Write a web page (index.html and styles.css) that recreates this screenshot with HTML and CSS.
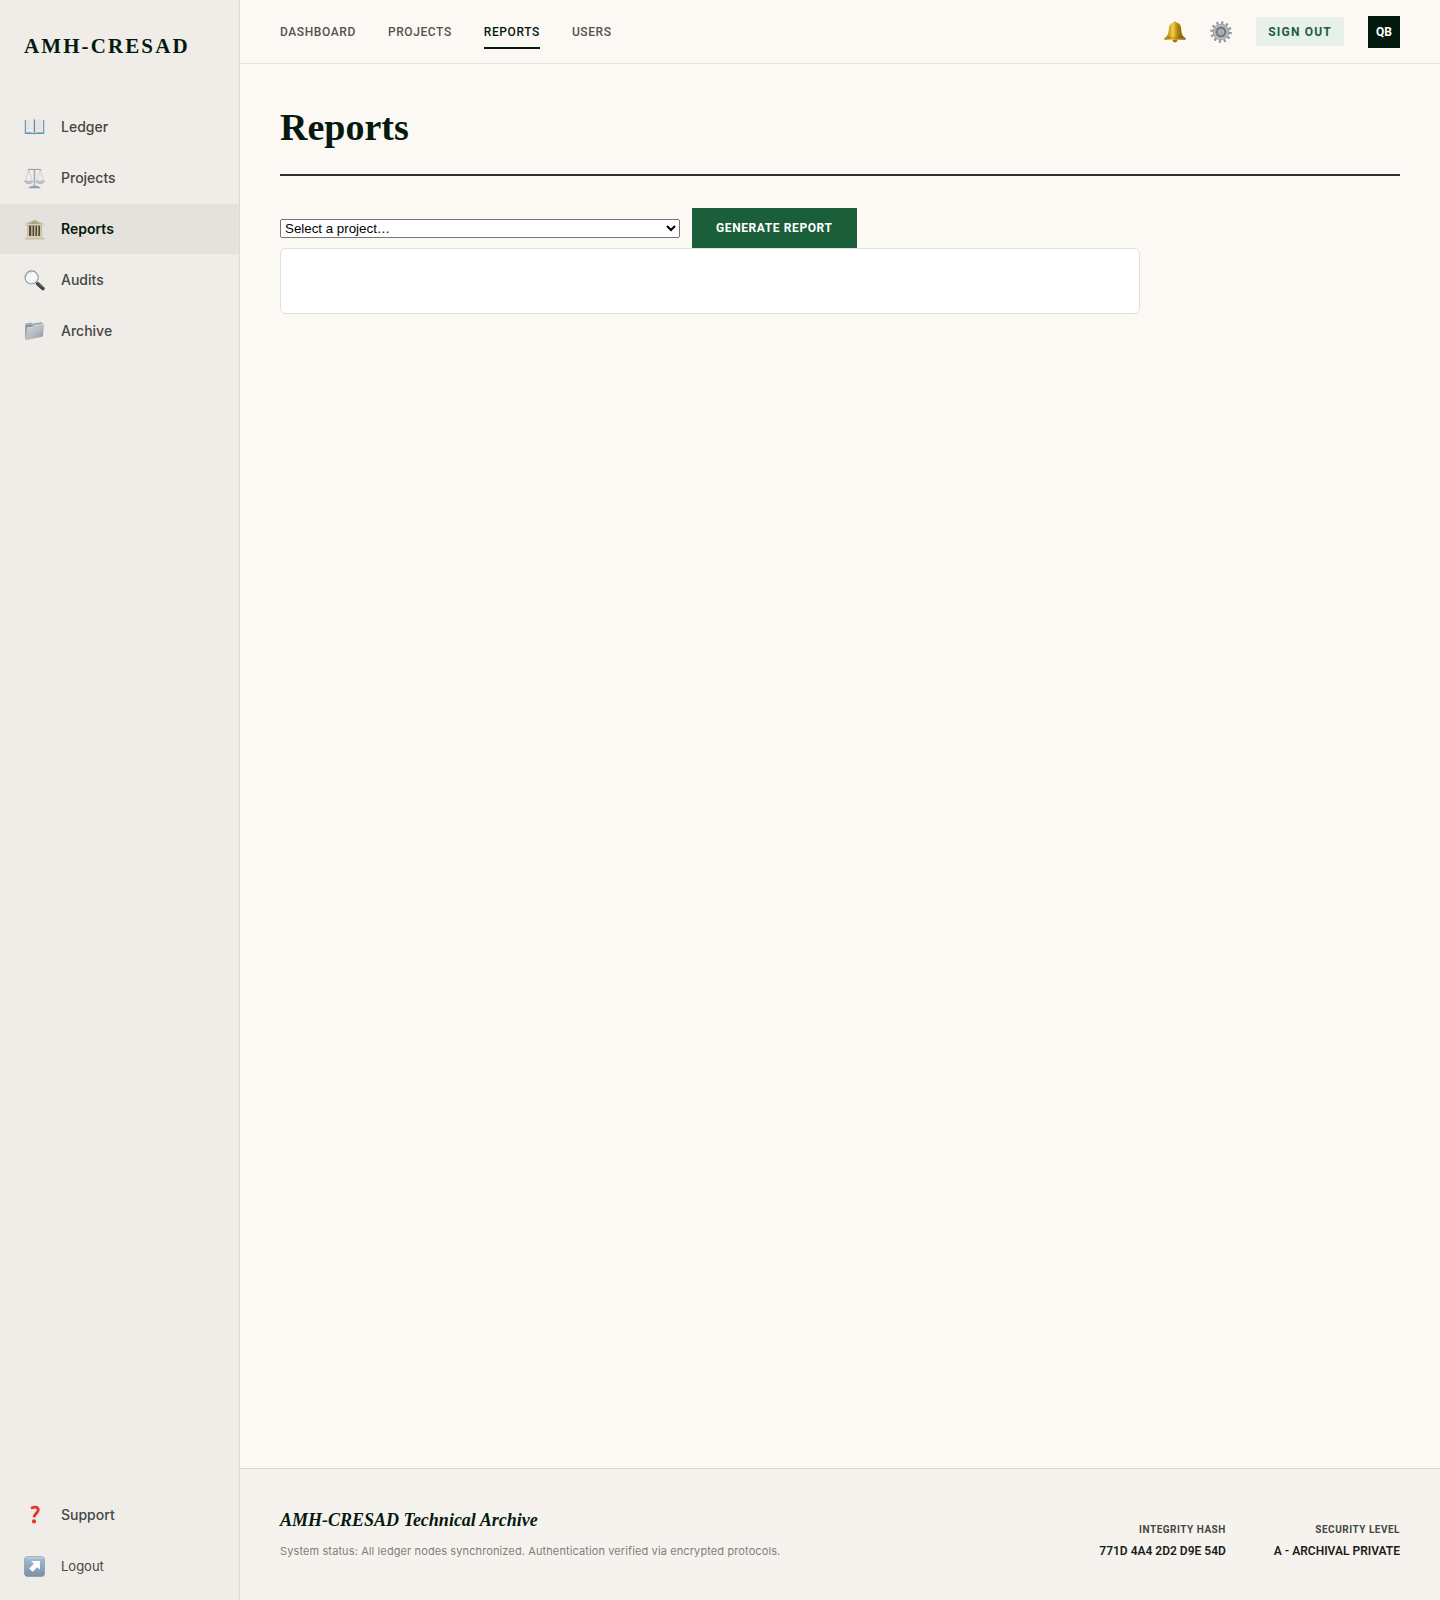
FILE: index.html
```html
<!DOCTYPE html>
<html lang="en">
<head>
<meta charset="utf-8">
<meta name="viewport" content="width=device-width, initial-scale=1">
<title>Reports - AMH-CRESAD</title>
<link rel="stylesheet" href="styles.css">
</head>
<body>
<div class="app">
  <aside class="sidebar">
    <div class="brand">AMH-CRESAD</div>
    <nav class="side-nav" aria-label="Sections">
      <a class="side-link" href="#ledger">
        <svg class="icon" viewBox="0 0 22 22" aria-hidden="true">
          <defs><linearGradient id="page" x1="0" x2="1"><stop offset="0" stop-color="#e4e3e4"/><stop offset=".75" stop-color="#f3f2f2"/><stop offset="1" stop-color="#b9b7b9"/></linearGradient></defs>
          <path d="M.8 3.200h20.400v14.600h-8.600q-1.600 1-3.200 0H.8z" fill="#5e97b5"/>
          <path d="M2 2q5-1 9 .7v14q-4-1.400-9-.7z" fill="url(#page)"/>
          <path d="M20 2q-5-1-9 .7v14q4-1.400 9-.7z" fill="#e9e8e9"/>
          <path d="M11 2.700v14.500" stroke="#858286" stroke-width="1.200"/>
          <path d="M3.500 4.500h5.500M3.500 7h5.500M3.500 9.500h5.500M3.500 12h5.500M13 4.500h5.500M13 7h5.500M13 9.500h5.500M13 12h5.500" stroke="#d6d4d8" stroke-width=".6"/>
          <path d="M2 16q5-.8 9 .8 4-1.600 9-.8" fill="none" stroke="#cfe0e8" stroke-width=".6"/>
        </svg>
        <span>Ledger</span>
      </a>
      <a class="side-link" href="#projects">
        <svg class="icon" viewBox="0 0 22 22" fill="none" aria-hidden="true">
          <path d="M4 1.800q3.500-.9 7 0 3.500-.9 7 0" stroke="#8f98a3" stroke-width="1.100"/>
          <path d="M11 1v17.500" stroke="#8f98a3" stroke-width="1.500"/>
          <path d="M11.300 2v16" stroke="#d4dae0" stroke-width=".5"/>
          <path d="M4.800 2L1.500 14M4.800 2l4 12M17.200 2l-4 12M17.200 2l3.300 12" stroke="#b5bac1" stroke-width=".6"/>
          <path d="M.6 13.800h8.800q-1 2.600-4.400 2.600T.6 13.800zM12.600 13.800h8.800q-1 2.600-4.400 2.600t-4.400-2.600z" fill="#c9cfd6" stroke="#8a939e" stroke-width=".6"/>
          <path d="M8 18.500h6l1.500 1.300H17v1.400H5v-1.400h1.500z" fill="#89939e"/>
          <path d="M6 20h10" stroke="#c4cbd2" stroke-width=".5"/>
        </svg>
        <span>Projects</span>
      </a>
      <a class="side-link is-active" href="#reports" aria-current="page">
        <svg class="icon" viewBox="0 0 22 22" aria-hidden="true">
          <path d="M11 .4l9.500 4.200v2.200h-19V4.600z" fill="#c9c2a1"/>
          <path d="M11 2l6.500 2.900h-13z" fill="#a59d7c"/>
          <path d="M1.800 5.600h18.400v1.200H1.800z" fill="#e2dcc0"/>
          <path d="M3.500 6.800h15V18h-15z" fill="#4d463b"/>
          <path d="M3.300 6.800h2v11.400h-2zM7.600 6.800h1.300v11.400H7.600zM10.700 6.800H12v11.400h-1.300zM13.700 6.800H15v11.400h-1.300zM16.800 6.800h1.900v11.400h-1.900z" fill="#d2cbad"/>
          <path d="M2.500 18h17v1.500h-17z" fill="#d8d2b4"/>
          <path d="M1 19.500h20.500v1.900H1z" fill="#c4bd98"/>
          <path d="M1 19.700h20.500" stroke="#e5dfc6" stroke-width=".5"/>
        </svg>
        <span>Reports</span>
      </a>
      <a class="side-link" href="#audits">
        <svg class="icon" viewBox="0 0 22 22" aria-hidden="true">
          <path d="M12.500 12.500l3 3" stroke="#7f858a" stroke-width="1.800"/>
          <path d="M14.500 14.500l5.300 4.900" stroke="#3e4144" stroke-width="3.800" stroke-linecap="round"/>
          <path d="M15 13.800l5 4.600" stroke="#84888b" stroke-width=".8" stroke-linecap="round"/>
          <circle cx="8" cy="7.800" r="6.900" fill="#f7f7f6" stroke="#8e979f" stroke-width="1.200"/>
          <path d="M2.700 7.500A5.400 5.400 0 0 1 8 2.500" fill="none" stroke="#c6d5e2" stroke-width="1"/>
          <path d="M13 9.800A5.600 5.600 0 0 1 8.500 13.300" fill="none" stroke="#dcdedd" stroke-width="1"/>
        </svg>
        <span>Audits</span>
      </a>
      <a class="side-link" href="#archive">
        <svg class="icon" viewBox="0 0 22 22" aria-hidden="true">
          <defs><linearGradient id="folder" x1="0" y1="0" x2="1" y2="1"><stop offset="0" stop-color="#d0d6da"/><stop offset=".5" stop-color="#b8bfc4"/><stop offset="1" stop-color="#8b959c"/></linearGradient></defs>
          <path d="M1.300 19V3.600l.8-1 5.500-.7 1 .9 9.700-1.500 1 .9v2z" fill="#89949c"/>
          <path d="M2 4l5.500-.8 1 .9 9.800-1.400" fill="none" stroke="#ced4d8" stroke-width=".7"/>
          <path d="M3.200 6.900l6-.9 1.200-1.300 9.900-1.500q.7 0 .6.800l-1 11.600q-.1.800-.9 1L3 20q-1.300.2-1.200-.9z" fill="url(#folder)"/>
          <path d="M3.500 7.200l6-.9 1.200-1.200 9.700-1.500" fill="none" stroke="#e2e6e8" stroke-width=".6"/>
        </svg>
        <span>Archive</span>
      </a>
    </nav>
    <nav class="side-nav side-nav-bottom" aria-label="Account">
      <a class="side-link" href="#support">
        <svg class="icon" viewBox="0 0 22 22" aria-hidden="true">
          <path d="M7.300 3.400Q14.200.3 14.900 5c.3 2.900-4 4-4.300 7.900" fill="none" stroke="#e8342f" stroke-width="3"/>
          <circle cx="10.500" cy="17.200" r="2.200" fill="#e5332f"/>
        </svg>
        <span>Support</span>
      </a>
      <button class="side-link side-button" type="button">
        <svg class="icon" viewBox="0 0 22 22" aria-hidden="true">
          <defs><linearGradient id="tile" x2="0" y2="1"><stop offset="0" stop-color="#a9c2d6"/><stop offset=".45" stop-color="#8faac0"/><stop offset="1" stop-color="#7890a5"/></linearGradient></defs>
          <rect x=".4" y=".4" width="21.200" height="21.200" rx="3.800" fill="url(#tile)" stroke="#748ca1" stroke-width=".6"/>
          <path d="M2.500 1.900h17" stroke="#c6d8e5" stroke-width="1" stroke-linecap="round"/>
          <path d="M7.500 5.300h9.200v9.200l-2.800-2.700-5 4.800-3.500-3.500 4.900-4.900z" fill="#fff"/>
        </svg>
        <span>Logout</span>
      </button>
    </nav>
  </aside>

  <div class="page">
    <header class="topbar">
      <nav class="tabs" aria-label="Main">
        <a class="tab" href="#dashboard">DASHBOARD</a>
        <a class="tab" href="#projects">PROJECTS</a>
        <a class="tab is-active" href="#reports" aria-current="page">REPORTS</a>
        <a class="tab" href="#users">USERS</a>
      </nav>
      <div class="actions">
        <button class="icon-button" type="button" aria-label="Notifications">
          <svg class="icon-large" viewBox="0 0 22 22" aria-hidden="true">
            <defs><linearGradient id="brass"><stop offset="0" stop-color="#8a6500"/><stop offset=".28" stop-color="#dcb11f"/><stop offset=".4" stop-color="#f0d257"/><stop offset=".6" stop-color="#b98a08"/><stop offset="1" stop-color="#664700"/></linearGradient></defs>
            <circle cx="11" cy="19.300" r="2.300" fill="#a87806"/>
            <circle cx="11" cy="1.900" r="1.500" fill="#b98b10"/>
            <path d="M11 1.600c4.200 0 6 2.500 6.200 6.400.2 5 1.400 7.400 3.900 8.700.9.500.8 1.800-.3 2H1.200c-1.100-.2-1.200-1.500-.3-2 2.500-1.300 3.700-3.700 3.900-8.700.2-3.900 2-6.400 6.200-6.400z" fill="url(#brass)"/>
            <path d="M3.500 16.400q7.500 1.600 15 0" fill="none" stroke="#7b5800" stroke-width=".6"/>
            <path d="M1.200 17.500q9.800 1.800 19.600 0" fill="none" stroke="#d9b03a" stroke-width=".5"/>
          </svg>
        </button>
        <button class="icon-button" type="button" aria-label="Settings">
          <svg class="icon-large" viewBox="0 0 22 22" aria-hidden="true">
            <circle cx="11" cy="11" r="9.400" fill="none" stroke="#8c949d" stroke-width="2.800" stroke-dasharray="2.100 2.822"/>
            <circle cx="11" cy="11" r="6.600" fill="#a2a9b0" stroke="#8f97a0" stroke-width="3.400"/>
            <circle cx="11" cy="11" r="6.700" fill="none" stroke="#bcc2c9" stroke-width="1.400"/>
            <circle cx="11" cy="11" r="4.200" fill="#8b939c" stroke="#66707a" stroke-width="1.200"/>
            <circle cx="11" cy="11" r="2.800" fill="#c9ced2"/>
            <circle cx="11" cy="11" r="1.400" fill="#fcf9f4" stroke="#59626a" stroke-width=".8"/>
          </svg>
        </button>
        <button class="sign-out" type="button">SIGN OUT</button>
        <div class="avatar">QB</div>
      </div>
    </header>

    <main class="content">
      <h1 class="title">Reports</h1>
      <form class="filters">
        <select class="project-select" aria-label="Project">
          <option>Select a project…</option>
        </select>
        <button class="generate" type="button">GENERATE REPORT</button>
      </form>
      <section class="report" aria-label="Generated report"></section>
    </main>

    <footer class="footer">
      <div class="about">
        <p class="about-title">AMH-CRESAD Technical Archive</p>
        <p class="about-text">System status: All ledger nodes synchronized. Authentication verified via encrypted protocols.</p>
      </div>
      <dl class="facts">
        <div class="fact">
          <dt>INTEGRITY HASH</dt>
          <dd>771D 4A4 2D2 D9E 54D</dd>
        </div>
        <div class="fact">
          <dt>SECURITY LEVEL</dt>
          <dd>A - ARCHIVAL PRIVATE</dd>
        </div>
      </dl>
    </footer>
  </div>
</div>
</body>
</html>
```
FILE: styles.css
```css
:root {
  --ink: #051a0f;
  --muted: #434843;
  --green: #1b5e3a;
  --line: #e5e2dd;
  --sans: Inter, "Liberation Sans", sans-serif;
  --label: Roboto, "Liberation Sans", sans-serif;
  --serif: "Liberation Serif", serif;
}

* {
  box-sizing: border-box;
}

body {
  margin: 0;
  background: #fcf9f4;
  color: #1c1c19;
  font-family: var(--sans);
}

a {
  color: inherit;
  text-decoration: none;
}

.app {
  display: flex;
  min-height: 100vh;
}

/* Sidebar */
.sidebar {
  display: flex;
  flex-direction: column;
  flex: 0 0 240px;
  padding: 32px 0 9px;
  background: #f0ede8;
  border-right: 1px solid #dcdad5;
}

.brand {
  padding: 0 24px;
  margin-bottom: 42px;
  color: var(--ink);
  font: 700 21px/28px var(--serif);
  letter-spacing: 0.1em;
}

.side-nav {
  display: flex;
  flex-direction: column;
  gap: 1px;
}

.side-nav-bottom {
  margin-top: auto;
}

.side-link {
  display: flex;
  align-items: center;
  gap: 16px;
  height: 50px;
  padding: 0 24px;
  color: var(--muted);
  font-size: 14px;
  font-weight: 500;
  line-height: 20px;
}

.side-link.is-active {
  background: var(--line);
  color: var(--ink);
  font-weight: 600;
}

.side-button {
  border: 0;
  background: none;
  font-family: inherit;
  font-size: 13px;
  font-weight: 400;
  text-align: left;
  cursor: pointer;
}

.icon {
  flex: none;
  width: 21px;
  height: 21px;
}

/* Top bar */
.page {
  display: flex;
  flex: 1;
  flex-direction: column;
  min-width: 0;
}

.topbar {
  display: flex;
  align-items: center;
  justify-content: space-between;
  height: 64px;
  padding: 0 40px;
  border-bottom: 1px solid var(--line);
}

.tabs {
  display: flex;
  gap: 32px;
}

.tab {
  padding: 8px 0 6px;
  border-bottom: 2px solid transparent;
  color: #50544f;
  font: 500 12px/18px var(--label);
  letter-spacing: 0.05em;
}

.tab.is-active {
  border-color: var(--ink);
  color: var(--ink);
}

.actions {
  display: flex;
  align-items: center;
  gap: 24px;
}

.icon-button {
  display: flex;
  padding: 0;
  border: 0;
  background: none;
  cursor: pointer;
}

.icon-large {
  width: 22px;
  height: 22px;
}

.sign-out {
  height: 29px;
  padding: 0 12px;
  border: 0;
  background: #e8f0ea;
  color: var(--green);
  font: 700 12px/18px var(--label);
  letter-spacing: 0.1em;
}

.avatar {
  display: flex;
  align-items: center;
  justify-content: center;
  width: 32px;
  height: 32px;
  background: var(--ink);
  color: #fff;
  font: 700 12px/18px var(--label);
}

/* Report page */
.content {
  flex: 1;
  padding: 40px;
}

.title {
  margin: 0 0 32px;
  padding-bottom: 24px;
  border-bottom: 2px solid #30312e;
  color: var(--ink);
  font: 700 38px/46px var(--serif);
}

.filters {
  display: flex;
  align-items: center;
  gap: 12px;
}

.project-select {
  width: 400px;
}

.generate {
  height: 40px;
  padding: 0 24px;
  border: 0;
  background: var(--green);
  color: #fff;
  font: 700 12px/18px var(--label);
  letter-spacing: 0.05em;
}

.report {
  max-width: 860px;
  padding: 32px;
  border: 1px solid #dde2df;
  border-radius: 6px;
  background: #fff;
}

/* Footer */
.footer {
  display: flex;
  align-items: flex-end;
  justify-content: space-between;
  padding: 40px;
  border-top: 1px solid #dcdad5;
  background: #f6f3ee;
}

.about-title {
  margin: 0 0 12px;
  color: var(--ink);
  font: italic 700 18px/22px var(--serif);
}

.about-text {
  margin: 0;
  color: #7c7f7a;
  font-size: 11px;
  line-height: 17px;
  letter-spacing: 0.01em;
}

.facts {
  display: flex;
  gap: 48px;
  margin: 0;
  text-align: right;
}

.fact dt {
  margin-bottom: 4px;
  color: var(--muted);
  font: 700 10px/16px var(--label);
  letter-spacing: 0.05em;
}

.fact dd {
  margin: 0;
  font: 600 12px/18px var(--label);
}
```
